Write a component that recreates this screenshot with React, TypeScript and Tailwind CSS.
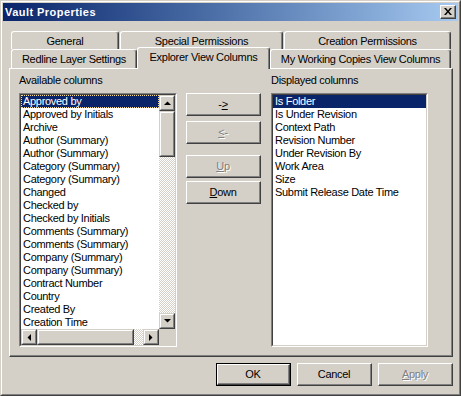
import type { ReactNode } from "react"

const available = [
  "Approved by",
  "Approved by Initials",
  "Archive",
  "Author (Summary)",
  "Author (Summary)",
  "Category (Summary)",
  "Category (Summary)",
  "Changed",
  "Checked by",
  "Checked by Initials",
  "Comments (Summary)",
  "Comments (Summary)",
  "Company (Summary)",
  "Company (Summary)",
  "Contract Number",
  "Country",
  "Created By",
  "Creation Time",
]

const displayed = [
  "Is Folder",
  "Is Under Revision",
  "Context Path",
  "Revision Number",
  "Under Revision By",
  "Work Area",
  "Size",
  "Submit Release Date Time",
]

const dither =
  "bg-[image:repeating-conic-gradient(#d4d0c8_0_25%,#ffffff_0_50%)] bg-[length:2px_2px]"

function Raised({ className = "", children }: { className?: string; children?: ReactNode }) {
  return (
    <div className={`border border-t-white border-l-white border-r-[#404040] border-b-[#404040] bg-[#d4d0c8] ${className}`}>
      <div className="h-full border-r border-b border-r-[#808080] border-b-[#808080] flex items-center justify-center">
        {children}
      </div>
    </div>
  )
}

function ScrollBtn({ className = "", children }: { className?: string; children?: ReactNode }) {
  return (
    <div className={`w-[16px] h-[16px] shrink-0 border border-t-[#d4d0c8] border-l-[#d4d0c8] border-r-[#404040] border-b-[#404040] bg-[#d4d0c8] ${className}`}>
      <div className="h-full border border-t-white border-l-white border-r-[#808080] border-b-[#808080] flex items-center justify-center">
        {children}
      </div>
    </div>
  )
}

function Arrow({ dir }: { dir: "up" | "down" | "left" | "right" }) {
  const pts = {
    up: "0,4 7,4 3.5,0.5",
    down: "0,0 7,0 3.5,3.5",
    left: "4,0 4,7 0.5,3.5",
    right: "0,0 0,7 3.5,3.5",
  }[dir]
  const vertical = dir === "up" || dir === "down"
  return (
    <svg width={vertical ? 7 : 4} height={vertical ? 4 : 7} viewBox={vertical ? "0 0 7 4" : "0 0 4 7"}>
      <polygon points={pts} fill="#000" />
    </svg>
  )
}

function Sunken({ className = "", children }: { className?: string; children?: ReactNode }) {
  return (
    <div className={`border border-t-[#808080] border-l-[#808080] border-r-white border-b-white ${className}`}>
      <div className="h-full border border-t-[#404040] border-l-[#404040] border-r-[#d4d0c8] border-b-[#d4d0c8] bg-white overflow-hidden">
        {children}
      </div>
    </div>
  )
}

function Tab({ label, className = "" }: { label: string; className?: string }) {
  return (
    <div
      className={`border-t border-l border-r border-t-white border-l-white border-r-[#404040] rounded-t-[3px] shadow-[inset_-1px_0_#808080] bg-[#d4d0c8] text-center pt-[3px] whitespace-nowrap ${className}`}
    >
      {label}
    </div>
  )
}

function Btn({ children, disabled, className = "" }: { children: ReactNode; disabled?: boolean; className?: string }) {
  return (
    <Raised className={`w-[75px] h-[23px] ${className}`}>
      <span className={disabled ? "text-[#808080] [text-shadow:1px_1px_0_#fff]" : ""}>{children}</span>
    </Raised>
  )
}

export default function App() {
  return (
    <div className="w-[461px] h-[396px] border border-t-[#d4d0c8] border-l-[#d4d0c8] border-r-[#404040] border-b-[#404040] font-['Liberation_Sans',Arial,sans-serif] text-[11px] leading-[13px] tracking-[-0.3px] text-black select-none">
      <div className="h-full border border-t-white border-l-white border-r-[#808080] border-b-[#808080] bg-[#d4d0c8] p-[1px] flex flex-col">
        {/* title bar */}
        <div className="h-[18px] bg-linear-to-r from-[#0a246a] to-[#a6caf0] flex items-center pl-[2px] pr-[2px]">
          <span className="font-bold text-white flex-1 tracking-[0.45px]">Vault Properties</span>
          <Raised className="w-[16px] h-[14px]">
            <svg width="8" height="7" viewBox="0 0 8 7">
              <path d="M0 0h2l2 2.5L6 0h2L5 3.5 8 7H6L4 4.5 2 7H0l3-3.5z" fill="#000" />
            </svg>
          </Raised>
        </div>

        {/* tabs */}
        <div className="mt-[10px] pl-[8px]">
          <div className="flex gap-[1px] h-[18px]">
            <Tab label="General" className="w-[108px]" />
            <Tab label="Special Permissions" className="w-[163px]" />
            <Tab label="Creation Permissions" className="w-[167px]" />
          </div>
          <div className="flex items-end h-[19px]">
            <Tab label="Redline Layer Settings" className="w-[126px] h-[19px]" />
            <Tab label="Explorer View Columns" className="w-[133px] h-[22px] -mb-[1px] relative z-10 pt-[3px]" />
            <Tab label="My Working Copies View Columns" className="w-[181px] h-[19px]" />
          </div>
        </div>

        {/* panel */}
        <div className="ml-[6px] w-[444px] h-[289px] border border-t-white border-l-white border-r-[#404040] border-b-[#404040]">
          <div className="h-full border-r border-b border-r-[#808080] border-b-[#808080] pt-[5px] pl-[9px] flex">
            <div className="w-[158px]">
              <div className="h-[13px] whitespace-nowrap">Available columns</div>
              <Sunken className="mt-[6px] h-[254px]">
                <div className="flex h-[234px]">
                  <div className="flex-1 overflow-hidden">
                    {available.map((item, i) => (
                      <div
                        key={i}
                        className={`h-[13px] pl-[2px] whitespace-nowrap ${
                          i === 0 ? "bg-[#0a246a] text-white outline-1 outline-dotted outline-[#f5db95] -outline-offset-1" : ""
                        }`}
                      >
                        {item}
                      </div>
                    ))}
                  </div>
                  <div className={`w-[16px] flex flex-col ${dither}`}>
                    <ScrollBtn>
                      <Arrow dir="up" />
                    </ScrollBtn>
                    <ScrollBtn className="h-[46px]" />
                    <div className="flex-1" />
                    <ScrollBtn>
                      <Arrow dir="down" />
                    </ScrollBtn>
                  </div>
                </div>
                <div className="flex h-[16px]">
                  <div className={`flex-1 flex ${dither}`}>
                    <ScrollBtn>
                      <Arrow dir="left" />
                    </ScrollBtn>
                    <ScrollBtn className="w-[97px]" />
                    <div className="flex-1" />
                    <ScrollBtn>
                      <Arrow dir="right" />
                    </ScrollBtn>
                  </div>
                  <div className="w-[16px] bg-[#d4d0c8]" />
                </div>
              </Sunken>
            </div>

            <div className="ml-[9px] mt-[19px] w-[75px] flex flex-col">
              <Btn>
                -<u>&gt;</u>
              </Btn>
              <Btn disabled className="mt-[5px]">
                <u>&lt;</u>-
              </Btn>
              <Btn disabled className="mt-[11px]">
                <u>U</u>p
              </Btn>
              <Btn className="mt-[3px]">
                <u>D</u>own
              </Btn>
            </div>

            <div className="ml-[10px] w-[157px]">
              <div className="h-[13px] whitespace-nowrap">Displayed columns</div>
              <Sunken className="mt-[6px] h-[254px]">
                {displayed.map((item, i) => (
                  <div
                    key={i}
                    className={`h-[13px] pl-[2px] whitespace-nowrap ${i === 0 ? "bg-[#0a246a] text-white" : ""}`}
                  >
                    {item}
                  </div>
                ))}
              </Sunken>
            </div>
          </div>
        </div>

        {/* dialog buttons */}
        <div className="mt-[6px] flex justify-end gap-[6px] pr-[5px]">
          <div className="w-[75px] h-[23px] border border-black">
            <Raised className="h-full">OK</Raised>
          </div>
          <Btn>Cancel</Btn>
          <Btn disabled>
            <u>A</u>pply
          </Btn>
        </div>
      </div>
    </div>
  )
}
